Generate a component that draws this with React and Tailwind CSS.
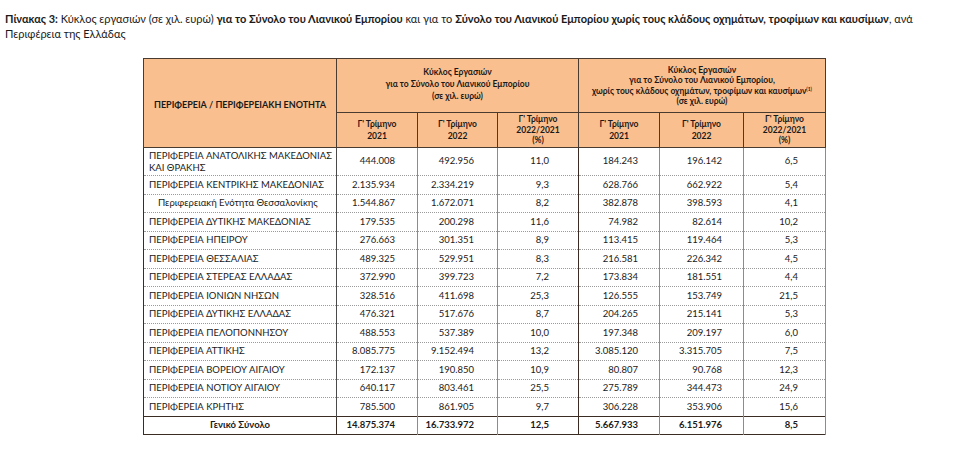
import React from 'react';

const rows = [
    { name: ['ΠΕΡΙΦΕΡΕΙΑ ΑΝΑΤΟΛΙΚΗΣ ΜΑΚΕΔΟΝΙΑΣ', 'ΚΑΙ ΘΡΑΚΗΣ'], v: ['444.008', '492.956', '11,0', '184.243', '196.142', '6,5'] },
    { name: ['ΠΕΡΙΦΕΡΕΙΑ ΚΕΝΤΡΙΚΗΣ ΜΑΚΕΔΟΝΙΑΣ'], v: ['2.135.934', '2.334.219', '9,3', '628.766', '662.922', '5,4'] },
    { name: ['Περιφερειακή Ενότητα Θεσσαλονίκης'], sub: true, v: ['1.544.867', '1.672.071', '8,2', '382.878', '398.593', '4,1'] },
    { name: ['ΠΕΡΙΦΕΡΕΙΑ ΔΥΤΙΚΗΣ ΜΑΚΕΔΟΝΙΑΣ'], v: ['179.535', '200.298', '11,6', '74.982', '82.614', '10,2'] },
    { name: ['ΠΕΡΙΦΕΡΕΙΑ ΗΠΕΙΡΟΥ'], v: ['276.663', '301.351', '8,9', '113.415', '119.464', '5,3'] },
    { name: ['ΠΕΡΙΦΕΡΕΙΑ ΘΕΣΣΑΛΙΑΣ'], v: ['489.325', '529.951', '8,3', '216.581', '226.342', '4,5'] },
    { name: ['ΠΕΡΙΦΕΡΕΙΑ ΣΤΕΡΕΑΣ ΕΛΛΑΔΑΣ'], v: ['372.990', '399.723', '7,2', '173.834', '181.551', '4,4'] },
    { name: ['ΠΕΡΙΦΕΡΕΙΑ ΙΟΝΙΩΝ ΝΗΣΩΝ'], v: ['328.516', '411.698', '25,3', '126.555', '153.749', '21,5'] },
    { name: ['ΠΕΡΙΦΕΡΕΙΑ ΔΥΤΙΚΗΣ ΕΛΛΑΔΑΣ'], v: ['476.321', '517.676', '8,7', '204.265', '215.141', '5,3'] },
    { name: ['ΠΕΡΙΦΕΡΕΙΑ ΠΕΛΟΠΟΝΝΗΣΟΥ'], v: ['488.553', '537.389', '10,0', '197.348', '209.197', '6,0'] },
    { name: ['ΠΕΡΙΦΕΡΕΙΑ ΑΤΤΙΚΗΣ'], v: ['8.085.775', '9.152.494', '13,2', '3.085.120', '3.315.705', '7,5'] },
    { name: ['ΠΕΡΙΦΕΡΕΙΑ ΒΟΡΕΙΟΥ ΑΙΓΑΙΟΥ'], v: ['172.137', '190.850', '10,9', '80.807', '90.768', '12,3'] },
    { name: ['ΠΕΡΙΦΕΡΕΙΑ ΝΟΤΙΟΥ ΑΙΓΑΙΟΥ'], v: ['640.117', '803.461', '25,5', '275.789', '344.473', '24,9'] },
    { name: ['ΠΕΡΙΦΕΡΕΙΑ ΚΡΗΤΗΣ'], v: ['785.500', '861.905', '9,7', '306.228', '353.906', '15,6'] },
];

const total = ['14.875.374', '16.733.972', '12,5', '5.667.933', '6.151.976', '8,5'];

// right padding per numeric column
const pads = ['pr-[22px]', 'pr-[23px]', 'pr-[29px]', 'pr-[21px]', 'pr-[21px]', 'pr-[27px]'];

const SubHead = () => (
    <>
        <th className="border border-[#4a3b30] font-bold leading-[12px]">Γ' Τρίμηνο<br />2021</th>
        <th className="border border-[#4a3b30] font-bold leading-[12px]">Γ' Τρίμηνο<br />2022</th>
        <th className="border border-[#4a3b30] font-bold leading-[10.5px]">Γ' Τρίμηνο<br />2022/2021<br />(%)</th>
    </>
);

export default function App() {
    return (
        <div className="w-[974px] h-[450px] bg-white text-[#1a1a1a] overflow-hidden" style={{ fontFamily: 'Lato, Roboto, sans-serif' }}>
            {/* Title */}
            <div className="pl-[5px] pr-2 pt-[11px] text-[11px] leading-[15px]">
                <span className="font-bold">Πίνακας 3:</span> Κύκλος εργασιών (σε χιλ. ευρώ) <span className="font-bold">για το Σύνολο του Λιανικού Εμπορίου</span> και για το <span className="font-bold">Σύνολο του Λιανικού Εμπορίου χωρίς τους κλάδους οχημάτων, τροφίμων και καυσίμων</span>, ανά Περιφέρεια της Ελλάδας
            </div>

            <table className="ml-[143px] mt-[17px] table-fixed border-collapse border border-[#3a2c22] text-[9.5px]">
                <colgroup>
                    <col className="w-[193px]" />
                    <col className="w-[81px]" />
                    <col className="w-[80px]" />
                    <col className="w-[81px]" />
                    <col className="w-[81px]" />
                    <col className="w-[84px]" />
                    <col className="w-[82px]" />
                </colgroup>
                <thead className="bg-[#fabf8f] text-[8.5px]">
                    <tr className="h-[54px]">
                        <th rowSpan={2} className="border border-[#4a3b30] font-bold text-[9px] pt-[4px]">ΠΕΡΙΦΕΡΕΙΑ / ΠΕΡΙΦΕΡΕΙΑΚΗ ΕΝΟΤΗΤΑ</th>
                        <th colSpan={3} className="border border-[#4a3b30] font-bold leading-[12px] pb-[4px]">
                            Κύκλος Εργασιών<br />για το Σύνολο του Λιανικού Εμπορίου<br />(σε χιλ. ευρώ)
                        </th>
                        <th colSpan={3} className="border border-[#4a3b30] font-bold leading-[10.5px]">
                            Κύκλος Εργασιών<br />για το Σύνολο του Λιανικού Εμπορίου,<br />
                            χωρίς τους κλάδους οχημάτων, τροφίμων και καυσίμων<sup className="text-[5px]">(1)</sup><br />(σε χιλ. ευρώ)
                        </th>
                    </tr>
                    <tr className="h-[35px]">
                        <SubHead />
                        <SubHead />
                    </tr>
                </thead>
                <tbody>
                    {rows.map((r, i) => (
                        <tr key={i} className={r.name.length > 1 ? 'h-[28px]' : 'h-[18.5px]'}>
                            <td className={`border-r border-r-[#4a4a4a] border-b border-dotted border-b-[#9a9a9a] leading-[12px] ${r.sub ? 'pl-[14px]' : 'pl-[5px]'}`} style={{ borderRightStyle: 'solid' }}>
                                {r.name.map((n, j) => <div key={j}>{n}</div>)}
                            </td>
                            {r.v.map((v, j) => (
                                <td key={j} className={`text-right ${pads[j]} border-b border-dotted border-b-[#9a9a9a] border-r ${j === 2 ? 'border-r-[#3a2c22]' : 'border-r-[#8c8c8c]'}`} style={{ borderRightStyle: 'solid' }}>
                                    {v}
                                </td>
                            ))}
                        </tr>
                    ))}
                    <tr className="h-[18px] font-bold border-t border-[#3a2c22]">
                        <td className="text-center border-r border-[#3a2c22]">Γενικό Σύνολο</td>
                        {total.map((v, j) => (
                            <td key={j} className={`text-right ${pads[j]} border-r ${j === 2 ? 'border-[#3a2c22]' : 'border-[#8c8c8c]'}`}>{v}</td>
                        ))}
                    </tr>
                </tbody>
            </table>
        </div>
    );
}
